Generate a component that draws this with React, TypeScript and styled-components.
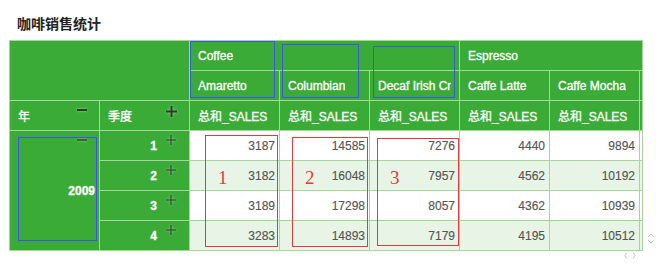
import styled, { createGlobalStyle } from "styled-components";

const GREEN = "#3aab37";
const LINE = "#a8d59b";
const ALT = "#e8f5e6";
const BLUE = "#3f55e6";
const RED = "#e8383d";

const GlobalStyle = createGlobalStyle`
  body {
    margin: 0;
    background: #ffffff;
    font-family: "Liberation Sans", Arial, "Noto Sans CJK SC", sans-serif;
  }
`;

const Page = styled.div`
  width: 663px;
  height: 273px;
  padding-left: 9px;
  box-sizing: border-box;
  overflow: hidden;
`;

const Title = styled.div`
  height: 40px;
  padding: 15px 0 0 8px;
  box-sizing: border-box;
  font-family: "Noto Sans CJK SC", sans-serif;
  font-size: 14px;
  line-height: 16px;
  font-weight: 700;
  color: #222;
`;

const Wrapper = styled.div`
  position: relative;
`;

const Scroller = styled.div`
  width: 634px;
  overflow: hidden;
  border-right: 1px solid ${LINE};
  box-sizing: border-box;
`;

const Grid = styled.table`
  border-collapse: collapse;
  table-layout: fixed;
  width: 720px;
  font-size: 12px;
`;

const Cell = styled.td<{ $head?: boolean; $alt?: boolean }>`
  padding: 0;
  border: 1px solid ${LINE};
  background: ${({ $head, $alt }) => ($head ? GREEN : $alt ? ALT : "#ffffff")};
  color: ${({ $head }) => ($head ? "#ffffff" : "#555555")};
  -webkit-text-stroke: ${({ $head }) => ($head ? "0.3px #ffffff" : "0.15px #555555")};
`;

const Inner = styled.div<{ $rows?: number; $right?: boolean; $pr?: number; $bold?: boolean }>`
  position: relative;
  height: ${({ $rows = 1 }) => $rows * 30 - 1}px;
  display: flex;
  align-items: center;
  justify-content: ${({ $right }) => ($right ? "flex-end" : "flex-start")};
  padding: 0 ${({ $pr = 4 }) => $pr}px 0 8px;
  white-space: nowrap;
  font-weight: ${({ $bold }) => ($bold ? 700 : 400)};
`;

const Label = styled.span`
  overflow: hidden;
  min-width: 0;
`;

const Toggle = styled.svg<{ $top: number; $right: number }>`
  position: absolute;
  top: ${({ $top }) => $top}px;
  right: ${({ $right }) => $right}px;
  filter: drop-shadow(0 0 1px rgba(255, 255, 255, 0.55));
`;

const Frame = styled.div<{ $c: string }>`
  position: absolute;
  display: flex;
  align-items: flex-start;
  border: 1px solid ${({ $c }) => $c};
  box-sizing: border-box;
  pointer-events: none;
`;

const Mark = styled.span<{ $pl: number; $pt: number }>`
  padding: ${({ $pt }) => $pt}px 0 0 ${({ $pl }) => $pl}px;
  font-family: "Liberation Serif", "Times New Roman", serif;
  font-size: 19px;
  line-height: 19px;
  color: ${RED};
`;

const Arrow = styled.svg`
  position: absolute;
`;

const Plus = ({ big, top, right }: { big?: boolean; top: number; right: number }) => (
  <Toggle $top={top} $right={right} width={big ? 11 : 10} height={big ? 11 : 10} viewBox="0 0 11 11">
    <path d="M0 5.5H11M5.5 0V11" stroke="#2b3a2b" strokeWidth={big ? 2 : 1.2} />
  </Toggle>
);

const Minus = ({ big, top, right }: { big?: boolean; top: number; right: number }) => (
  <Toggle $top={top} $right={right} width={10} height={10} viewBox="0 0 10 10">
    <path d="M0 5H10" stroke="#2b3a2b" strokeWidth={big ? 2 : 1.4} />
  </Toggle>
);

const rows = [
  { q: 1, v: [3187, 14585, 7276, 4440, 9894] },
  { q: 2, v: [3182, 16048, 7957, 4562, 10192] },
  { q: 3, v: [3189, 17298, 8057, 4362, 10939] },
  { q: 4, v: [3283, 14893, 7179, 4195, 10512] },
];

const products = ["Amaretto", "Columbian", "Decaf Irish Cream", "Caffe Latte", "Caffe Mocha"];

// annotation frames drawn over the grid
const blueFrames = [
  { left: 181, top: 1, width: 85, height: 57 },
  { left: 273, top: 4, width: 77, height: 54 },
  { left: 364, top: 6, width: 82, height: 52 },
  { left: 9, top: 97, width: 79, height: 104 },
];

const redFrames = [
  { left: 196, top: 95, width: 73, height: 112, n: "1", pl: 12, pt: 32 },
  { left: 283, top: 97, width: 76, height: 110, n: "2", pl: 12, pt: 30 },
  { left: 368, top: 98, width: 82, height: 108, n: "3", pl: 12, pt: 29 },
];

export default function App() {
  return (
    <Page>
      <GlobalStyle />
      <Title>咖啡销售统计</Title>
      <Wrapper>
        <Scroller>
          <Grid>
            <colgroup>
              {Array.from({ length: 8 }).map((_, i) => (
                <col key={i} style={{ width: 90 }} />
              ))}
            </colgroup>
            <tbody>
              <tr>
                <Cell $head colSpan={2} rowSpan={2}>
                  <Inner $rows={2} />
                </Cell>
                <Cell $head colSpan={3}>
                  <Inner>Coffee</Inner>
                </Cell>
                <Cell $head colSpan={3}>
                  <Inner>Espresso</Inner>
                </Cell>
              </tr>
              <tr>
                {products.map((p) => (
                  <Cell $head key={p}>
                    <Inner $pr={8}>
                      <Label>{p}</Label>
                    </Inner>
                  </Cell>
                ))}
                <Cell $head>
                  <Inner />
                </Cell>
              </tr>
              <tr>
                <Cell $head>
                  <Inner>
                    年
                    <Minus big top={4} right={12} />
                  </Inner>
                </Cell>
                <Cell $head>
                  <Inner>
                    季度
                    <Plus big top={5} right={12} />
                  </Inner>
                </Cell>
                {products.map((p) => (
                  <Cell $head key={p}>
                    <Inner>总和_SALES</Inner>
                  </Cell>
                ))}
                <Cell $head>
                  <Inner />
                </Cell>
              </tr>
              {rows.map((r, i) => (
                <tr key={r.q}>
                  {i === 0 && (
                    <Cell $head rowSpan={4}>
                      <Inner $rows={4} $right $bold>
                        2009
                        <Minus top={4} right={12} />
                      </Inner>
                    </Cell>
                  )}
                  <Cell $head>
                    <Inner $right $bold $pr={32}>
                      {r.q}
                      <Plus top={4} right={13} />
                    </Inner>
                  </Cell>
                  {r.v.map((n, j) => (
                    <Cell key={j} $alt={i % 2 === 1}>
                      <Inner $right>{n}</Inner>
                    </Cell>
                  ))}
                  <Cell $alt={i % 2 === 1}>
                    <Inner />
                  </Cell>
                </tr>
              ))}
            </tbody>
          </Grid>
        </Scroller>

        {blueFrames.map((f, i) => (
          <Frame key={i} $c={BLUE} style={{ left: f.left, top: f.top, width: f.width, height: f.height }} />
        ))}
        {redFrames.map((f) => (
          <Frame key={f.n} $c={RED} style={{ left: f.left, top: f.top, width: f.width, height: f.height }}>
            <Mark $pl={f.pl} $pt={f.pt}>
              {f.n}
            </Mark>
          </Frame>
        ))}

        <Arrow style={{ left: 638, top: 193 }} width="8" height="11" viewBox="0 0 8 11">
          <path d="M1 4L4 1L7 4M1 7L4 10L7 7" stroke="#c4c4c4" strokeWidth="1" fill="none" />
        </Arrow>
        <Arrow style={{ left: 615, top: 212 }} width="12" height="7" viewBox="0 0 12 7">
          <path d="M3 0.5L0.8 3.5L3 6.5M9 0.5L11.2 3.5L9 6.5" stroke="#c4c4c4" strokeWidth="1" fill="none" />
        </Arrow>
      </Wrapper>
    </Page>
  );
}
